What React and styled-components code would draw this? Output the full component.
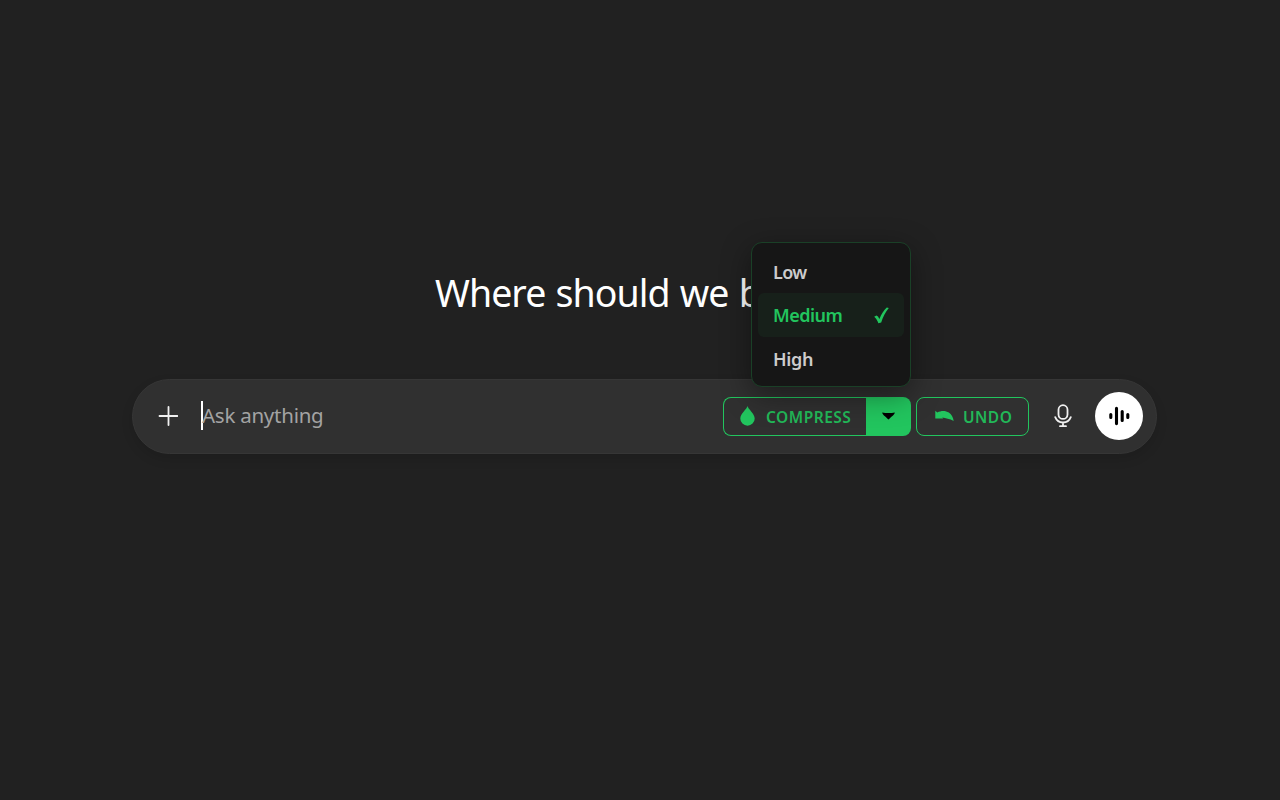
import React from "react";
import styled, { createGlobalStyle } from "styled-components";

const GlobalStyle = createGlobalStyle`
  * { box-sizing: border-box; }
  body {
    margin: 0;
    background: #212121;
    font-family: "Segoe UI", "Noto Sans", "Open Sans", sans-serif;
  }
  button { font: inherit; margin: 0; }
`;

const Page = styled.main`
  height: 800px;
  padding: 267px 123px 0 132px;
  display: flex;
  flex-direction: column;
  align-items: center;
  overflow: hidden;
`;

const Heading = styled.h1`
  margin: 0 0 60px;
  width: 419px;
  height: 52px;
  line-height: 52px;
  font-size: 37.5px;
  font-weight: 400;
  letter-spacing: -0.95px;
  word-spacing: 1.4px;
  white-space: nowrap;
  color: #fff;
`;

const Composer = styled.div`
  width: 100%;
  height: 75px;
  padding: 0 13px 2px 23px;
  display: flex;
  align-items: center;
  border: 1px solid #363636;
  border-radius: 38px;
  background: #303030;
  box-shadow: 0 5px 12px rgba(0, 0, 0, 0.12);
`;

const IconButton = styled.button`
  flex: none;
  display: flex;
  align-items: center;
  justify-content: center;
  width: ${(p) => p.$width}px;
  height: 38px;
  padding: 0;
  border: 0;
  background: transparent;
  color: #f0f0f0;
`;

const Prompt = styled.div`
  flex: 1;
  display: flex;
  align-items: center;
  margin-left: 21px;
  font-size: 20.5px;
  letter-spacing: -0.25px;
  line-height: 28px;
  padding-bottom: 1px;
  color: #a3a3a3;
`;

const Caret = styled.span`
  width: 2px;
  height: 29px;
  margin-right: -1px;
  background: #fff;
`;

const Actions = styled.div`
  display: flex;
  gap: 5px;
  margin: 1px 15px 0 0;
`;

const SplitButton = styled.div`
  position: relative;
  display: flex;
  width: 188px;
  height: 39px;
`;

const ActionButton = styled.button`
  display: flex;
  align-items: center;
  width: ${(p) => p.$width}px;
  height: 39px;
  padding: 0 0 0 ${(p) => p.$pad}px;
  gap: ${(p) => p.$gap}px;
  border: 1px solid #22c55e;
  border-right-width: ${(p) => (p.$joined ? 0 : 1)}px;
  border-radius: ${(p) => (p.$joined ? "8px 0 0 8px" : "8px")};
  background: transparent;
  color: #22b858;
  font-size: 15.5px;
  font-weight: 650;
  letter-spacing: 0.5px;
`;

const ButtonLabel = styled.span`
  padding-top: 1px;
`;

const Toggle = styled.button`
  display: flex;
  align-items: center;
  justify-content: center;
  width: 45px;
  height: 39px;
  padding: 0;
  border: 0;
  border-radius: 0 8px 8px 0;
  background: #22c55e;
`;

const Menu = styled.div`
  position: absolute;
  right: 0;
  bottom: 49px;
  width: 160px;
  height: 145px;
  padding: 7px 6px;
  border: 1px solid #1a4027;
  border-radius: 11px;
  background: #161616;
  box-shadow: 0 8px 30px rgba(0, 0, 0, 0.42);
`;

const MenuItem = styled.div`
  display: flex;
  align-items: center;
  justify-content: space-between;
  height: 43.5px;
  padding: 1px 15px 0;
  border-radius: 6px;
  background: ${(p) => (p.$selected ? "#17201a" : "transparent")};
  color: ${(p) => (p.$selected ? "#22c55e" : "#cccccc")};
  font-size: 18px;
  font-weight: 650;
  letter-spacing: ${(p) => p.$tracking}px;
`;

const VoiceButton = styled.button`
  flex: none;
  display: flex;
  align-items: center;
  justify-content: center;
  width: 48px;
  height: 48px;
  margin-left: 13px;
  padding: 0;
  border: 0;
  border-radius: 50%;
  background: #fff;
`;

const PlusIcon = () => (
  <svg width="20" height="20" viewBox="0 0 20 20" fill="none" stroke="currentColor" strokeWidth="1.8" strokeLinecap="round">
    <path d="M10.5 1v18M1.5 10h18" />
  </svg>
);

const DropIcon = () => (
  <svg width="15" height="20" viewBox="0 0 15 20" fill="#22c55e">
    <path d="M7.5 0C6.8 3.2 0.3 7.7 0.3 12.5a7.2 7.2 0 0 0 14.4 0C14.7 7.7 8.2 3.2 7.5 0Z" />
  </svg>
);

const UndoIcon = () => (
  <svg width="19" height="12" viewBox="0 0 19 12" fill="#22c55e">
    <path d="M0.3 0.8 2.3 2.5C6 0.6 10.5 0.4 13.8 2.6c2.7 1.8 4.3 4.9 4.9 8.4C14.5 8.9 10.8 8.3 7.2 7.6L8.2 8.4 0.3 8.4Z" />
  </svg>
);

const ArrowIcon = () => (
  <svg width="13" height="8" viewBox="0 0 13 8" fill="#000">
    <path d="M0.2 0.5C4 1.3 9 1.3 12.8 0.5 12.5 3 8.8 5 6.5 7.6 4.2 5 0.5 3 0.2 0.5Z" />
  </svg>
);

const CheckIcon = () => (
  <svg width="15" height="17" viewBox="0 0 15 17" fill="#22c55e">
    <path d="M0.2 9.7 2.4 8.6 4 9.6 5.4 11.9C7.3 7.3 9.8 3.5 12.8 0.6L14.8 0.9C11.4 5.2 8.9 10 7.2 15.4L4.4 16.2C3.4 13.5 2 11.1 0.2 9.7Z" />
  </svg>
);

const MicIcon = () => (
  <svg width="18" height="24" viewBox="0 0 18 24" fill="none" stroke="currentColor" strokeWidth="1.8" strokeLinecap="round">
    <rect x="4.5" y="1.2" width="9" height="13.7" rx="4.5" />
    <path d="M1.2 13.2C2.5 16.5 5.4 18.5 9 18.5s6.5-2 7.8-5.3M9 18.5v3.6M6 22.2h6" />
  </svg>
);

const WaveIcon = () => (
  <svg width="22" height="20" viewBox="0 0 22 20" fill="none" stroke="#000" strokeWidth="3.1" strokeLinecap="round">
    <path d="M2.8 8.5v3M8.5 2.4v15.2M14.2 5.6v8.8M19.8 8.5v3" />
  </svg>
);

export default function App() {
  return (
    <Page>
      <GlobalStyle />
      <Heading>Where should we begin?</Heading>
      <Composer>
        <IconButton $width={24} aria-label="Add"><PlusIcon /></IconButton>
        <Prompt><Caret />Ask anything</Prompt>
        <Actions>
          <SplitButton>
            <ActionButton $joined $width={143} $pad={16} $gap={11}>
              <DropIcon /><ButtonLabel>COMPRESS</ButtonLabel>
            </ActionButton>
            <Toggle aria-label="Compression level"><ArrowIcon /></Toggle>
            <Menu>
              <MenuItem $tracking={-0.7}>Low</MenuItem>
              <MenuItem $selected $tracking={-0.5}>Medium<CheckIcon /></MenuItem>
              <MenuItem $tracking={-0.3}>High</MenuItem>
            </Menu>
          </SplitButton>
          <ActionButton $width={113} $pad={18} $gap={9}>
            <UndoIcon /><ButtonLabel>UNDO</ButtonLabel>
          </ActionButton>
        </Actions>
        <IconButton $width={38} aria-label="Dictate"><MicIcon /></IconButton>
        <VoiceButton aria-label="Voice mode"><WaveIcon /></VoiceButton>
      </Composer>
    </Page>
  );
}
